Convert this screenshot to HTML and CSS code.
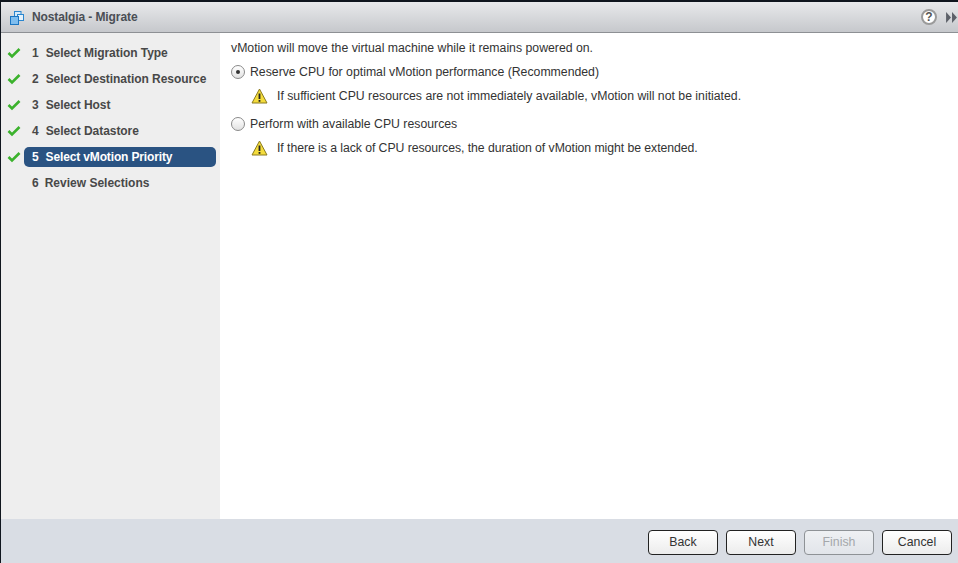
FILE: index.html
```html
<!DOCTYPE html>
<html>
<head>
	<meta charset="utf-8">
	<title>Nostalgia - Migrate</title>
	<link rel="stylesheet" href="styles.css">
</head>
<body>
	<div class="dialog">
		<div class="titlebar">
			<svg class="titleicon" width="14" height="14" viewBox="0 0 14 14">
				<rect x="4.5" y="0.5" width="6.5" height="6.5" fill="#d5eafa" stroke="#2a86cf"/>
				<rect x="7.5" y="3.5" width="6" height="6" fill="#e4f1fb" stroke="#2a86cf"/>
				<rect x="0.5" y="5.5" width="8" height="8" fill="#7fbdee" stroke="#1b75c2"/>
			</svg>
			<span class="titletext">Nostalgia - Migrate</span>
			<span class="titlespacer"></span>
			<span class="helpicon">?</span>
			<svg class="moreicon" width="13" height="11" viewBox="0 0 12 10">
				<path d="M1 0 L5.5 5 L1 10 Z M6.5 0 L11 5 L6.5 10 Z" fill="#5c6068"/>
			</svg>
		</div>
		<div class="main">
			<ul class="steps">
				<li class="step">
					<svg class="check" width="14" height="12" viewBox="0 0 14 12"><path d="M1.5 6 L5 9.5 L12.5 2" fill="none" stroke="#3bb22c" stroke-width="2.6"/></svg>
					<span class="steplabel"><span class="num">1</span>Select Migration Type</span>
				</li>
				<li class="step">
					<svg class="check" width="14" height="12" viewBox="0 0 14 12"><path d="M1.5 6 L5 9.5 L12.5 2" fill="none" stroke="#3bb22c" stroke-width="2.6"/></svg>
					<span class="steplabel"><span class="num">2</span>Select Destination Resource</span>
				</li>
				<li class="step">
					<svg class="check" width="14" height="12" viewBox="0 0 14 12"><path d="M1.5 6 L5 9.5 L12.5 2" fill="none" stroke="#3bb22c" stroke-width="2.6"/></svg>
					<span class="steplabel"><span class="num">3</span>Select Host</span>
				</li>
				<li class="step">
					<svg class="check" width="14" height="12" viewBox="0 0 14 12"><path d="M1.5 6 L5 9.5 L12.5 2" fill="none" stroke="#3bb22c" stroke-width="2.6"/></svg>
					<span class="steplabel"><span class="num">4</span>Select Datastore</span>
				</li>
				<li class="step active">
					<svg class="check" width="14" height="12" viewBox="0 0 14 12"><path d="M1.5 6 L5 9.5 L12.5 2" fill="none" stroke="#3bb22c" stroke-width="2.6"/></svg>
					<span class="steplabel"><span class="num">5</span>Select vMotion Priority</span>
				</li>
				<li class="step pending">
					<span class="nocheck"></span>
					<span class="steplabel"><span class="num">6</span>Review Selections</span>
				</li>
			</ul>
			<div class="content">
				<p class="intro">vMotion will move the virtual machine while it remains powered on.</p>
				<div class="option">
					<span class="radio checked"></span>
					<span>Reserve CPU for optimal vMotion performance (Recommended)</span>
				</div>
				<div class="warning">
					<svg class="warnicon" width="17" height="16" viewBox="0 0 17 16">
						<path d="M8.5 1 L16 15 L1 15 Z" fill="#f4dc3c" stroke="#8a7a1e" stroke-linejoin="round"/>
						<rect x="7.6" y="5.5" width="1.8" height="5.5" fill="#222"/>
						<rect x="7.6" y="12" width="1.8" height="1.8" fill="#222"/>
					</svg>
					<span>If sufficient CPU resources are not immediately available, vMotion will not be initiated.</span>
				</div>
				<div class="option">
					<span class="radio"></span>
					<span>Perform with available CPU resources</span>
				</div>
				<div class="warning tight">
					<svg class="warnicon" width="17" height="16" viewBox="0 0 17 16">
						<path d="M8.5 1 L16 15 L1 15 Z" fill="#f4dc3c" stroke="#8a7a1e" stroke-linejoin="round"/>
						<rect x="7.6" y="5.5" width="1.8" height="5.5" fill="#222"/>
						<rect x="7.6" y="12" width="1.8" height="1.8" fill="#222"/>
					</svg>
					<span>If there is a lack of CPU resources, the duration of vMotion might be extended.</span>
				</div>
			</div>
		</div>
		<div class="footer">
			<button class="btn">Back</button>
			<button class="btn">Next</button>
			<button class="btn disabled">Finish</button>
			<button class="btn">Cancel</button>
		</div>
	</div>
</body>
</html>
```

FILE: styles.css
```css
* {
	margin: 0;
	padding: 0;
	box-sizing: border-box;
}

html, body {
	width: 100%;
	height: 100%;
	overflow: hidden;
}

body {
	background: #10161e;
	padding-top: 2px;
	font-family: "Liberation Sans", Arial, sans-serif;
	font-size: 12px;
	color: #333;
}

.dialog {
	height: 561px;
	margin-left: 1px;
	display: flex;
	flex-direction: column;
	background: #fff;
}

.titlebar {
	height: 31px;
	flex: none;
	display: flex;
	align-items: center;
	padding: 0 0 0 9px;
	background: linear-gradient(#e8e9eb, #c6c8cc);
	border-bottom: 1px solid #8d9094;
}

.titleicon {
	margin: 1px 8px 0 0;
}

.titletext {
	font-weight: bold;
	letter-spacing: -0.1px;
	color: #4a4e55;
}

.titlespacer {
	flex: 1;
}

.helpicon {
	width: 16px;
	height: 16px;
	border-radius: 50%;
	border: 2px solid #9a9a9a;
	background: #fff;
	color: #555;
	font-size: 12px;
	font-weight: bold;
	line-height: 12px;
	text-align: center;
	margin-right: 8px;
}

.main {
	flex: 1;
	display: flex;
	min-height: 0;
}

.steps {
	width: 219px;
	flex: none;
	list-style-type: none;
	background: #eee;
	padding-top: 7px;
}

.step {
	height: 26px;
	display: flex;
	align-items: center;
	padding-left: 6px;
}

.check, .nocheck {
	width: 14px;
	height: 12px;
	flex: none;
	margin-right: 3px;
}

.steplabel {
	width: 192px;
	height: 20px;
	line-height: 20px;
	padding-left: 8px;
	border-radius: 5px;
	font-weight: bold;
	letter-spacing: -0.05px;
	color: #484848;
}

.num {
	margin-right: 7px;
}

.step.pending .steplabel {
	letter-spacing: 0;
}

.step.pending .num {
	margin-right: 6px;
}

.step.active .steplabel {
	background: #2a5382;
	letter-spacing: -0.14px;
	color: #fff;
}

.content {
	flex: 1;
	padding: 8px 11px;
	font-size: 12.27px;
}

.intro {
	line-height: 14px;
	margin-bottom: 9px;
}

.option {
	height: 16px;
	display: flex;
	align-items: center;
	gap: 5px;
}

.radio {
	width: 14px;
	height: 14px;
	flex: none;
	border-radius: 50%;
	border: 1px solid #8a8a8a;
	background: linear-gradient(#fff, #e2e2e2);
	display: flex;
	align-items: center;
	justify-content: center;
}

.radio.checked::after {
	content: "";
	width: 4px;
	height: 4px;
	border-radius: 50%;
	background: #333;
}

.warning {
	height: 20px;
	margin: 6px 0 10px;
	display: flex;
	align-items: center;
	padding-left: 20px;
	gap: 9px;
}

.warning.tight {
	letter-spacing: -0.06px;
}

.footer {
	height: 44px;
	flex: none;
	display: flex;
	align-items: center;
	justify-content: flex-end;
	gap: 8px;
	padding: 2px 6px 0 0;
	background: #d9dde4;
}

.btn {
	width: 70px;
	height: 25px;
	border: 1px solid #222;
	border-radius: 4px;
	background: linear-gradient(#fff, #ececec);
	font-family: inherit;
	font-size: 12.3px;
	color: #333;
}

.btn.disabled {
	border-color: #8e9296;
	color: #a4a7ab;
	background: linear-gradient(#eef0f3, #e2e5ea);
}
```
